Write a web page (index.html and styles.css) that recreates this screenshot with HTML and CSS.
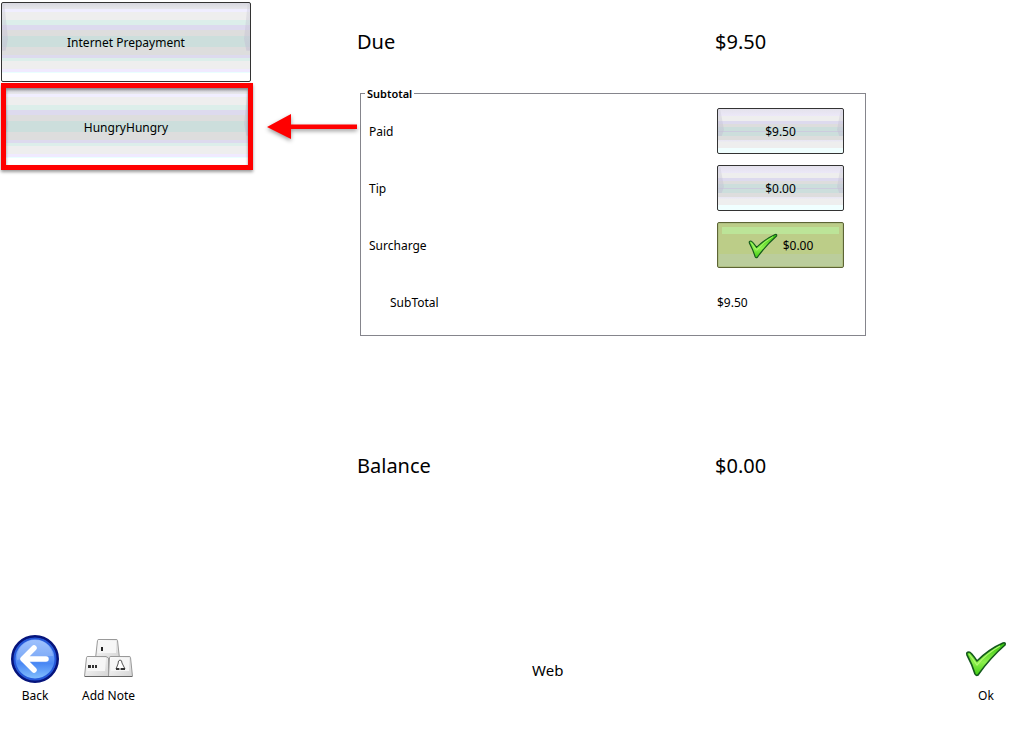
FILE: index.html
```
<!DOCTYPE html>
<html lang="en">
<head>
  <meta charset="UTF-8">
  <meta name="viewport" content="width=device-width, initial-scale=1.0">
  <title>Payment</title>
  <link rel="stylesheet" href="styles.css">
</head>
<body>
  <svg class="defs" width="0" height="0" aria-hidden="true">
    <defs>
      <linearGradient id="tickFill" x1="0" y1="0" x2="0" y2="1">
        <stop offset="0" stop-color="#35c40c"/>
        <stop offset="0.6" stop-color="#8cf04c"/>
        <stop offset="1" stop-color="#3ecb10"/>
      </linearGradient>
      <linearGradient id="backFill" x1="0" y1="0" x2="0" y2="1">
        <stop offset="0" stop-color="#8fb8ff"/>
        <stop offset="0.5" stop-color="#5c94f5"/>
        <stop offset="0.6" stop-color="#4a88f4"/>
        <stop offset="1" stop-color="#8cc8ff"/>
      </linearGradient>
      <linearGradient id="keyFill" x1="0" y1="0" x2="1" y2="1">
        <stop offset="0" stop-color="#ffffff"/>
        <stop offset="1" stop-color="#d4d4d4"/>
      </linearGradient>
      <symbol id="tick" viewBox="0 0 42 36">
        <path d="M2 14 Q1 11 4 11 Q6 11 12 20 Q24 8 38 2 Q41 1 40 4 Q25 17 13 34 Q11 35 10 33 Q7 23 2 14Z" fill="url(#tickFill)" stroke="#14591c" stroke-width="1.6" stroke-linejoin="round"/>
        <path d="M4 13 Q8 18 12 24 Q22 12 35 5" fill="none" stroke="#b0f870" stroke-width="1.2"/>
      </symbol>
    </defs>
  </svg>

  <div class="screen">
    <div class="content">
      <nav class="methods">
        <button type="button" class="btn btn-method">Internet Prepayment</button>
        <div class="highlighted">
          <button type="button" class="btn btn-method">HungryHungry</button>
          <svg class="arrow" width="94" height="32" viewBox="0 0 94 32" aria-hidden="true">
            <path d="M1 14 L25 1 V11.500 H91 V16 H25 V26 Z" fill="#f00"/>
          </svg>
        </div>
      </nav>

      <main class="payment">
        <div class="total">
          <span>Due</span>
          <span>$9.50</span>
        </div>

        <fieldset class="subtotal">
          <legend>Subtotal</legend>
          <div class="row">
            <label for="paid">Paid</label>
            <button type="button" id="paid" class="btn btn-amount">$9.50</button>
          </div>
          <div class="row">
            <label for="tip">Tip</label>
            <button type="button" id="tip" class="btn btn-amount">$0.00</button>
          </div>
          <div class="row">
            <label for="surcharge">Surcharge</label>
            <button type="button" id="surcharge" class="btn btn-amount selected">
              <svg width="30" height="26" aria-hidden="true"><use href="#tick"/></svg>
              $0.00
            </button>
          </div>
          <div class="row row-sum">
            <span class="indent">SubTotal</span>
            <span>$9.50</span>
          </div>
        </fieldset>

        <div class="total balance">
          <span>Balance</span>
          <span>$0.00</span>
        </div>
      </main>
    </div>

    <footer class="toolbar">
      <button type="button" class="tool">
        <svg width="50" height="50" viewBox="0 0 50 50" aria-hidden="true">
          <circle cx="25" cy="25" r="22.500" fill="url(#backFill)" stroke="#06147c" stroke-width="3"/>
          <circle cx="25" cy="25" r="20.500" fill="none" stroke="#2457d8" stroke-width="2"/>
          <path d="M7 26 A18 18 0 0 1 43 22 Q25 22 7 26Z" fill="#fff" opacity="0.2"/>
          <path d="M24 14 L13 25 L24 36 M14 25 H36" fill="none" stroke="#fff" stroke-width="5.500" stroke-linecap="round" stroke-linejoin="round"/>
        </svg>
        Back
      </button>
      <button type="button" class="tool">
        <svg width="52" height="50" viewBox="0 0 52 50" aria-hidden="true">
          <g fill="url(#keyFill)" stroke="#999">
            <path d="M14.500 6.500 Q14.500 5.500 16 5.500 H33 Q34.500 5.500 34.500 6.500 L36.500 24.500 H12.500 Z"/>
            <path d="M3.500 23.500 Q3.500 22.500 5 22.500 H23 L25.500 24 V42.500 H1.500 Z"/>
            <path d="M26.500 23.500 Q26.500 22.500 28 22.500 H46 Q47.500 22.500 47.500 23.500 L49.500 42.500 H25.500 Z"/>
          </g>
          <path d="M16 7 H33 L33 19 H15 Z M5 24 H23 L22 37 H4 Z M28 24 H46 L46 37 H28 Z" fill="#f6f6f6"/>
          <path d="M2 42.500 H49" stroke="#666"/>
          <path d="M18 13 H20 V17 H18 Z" fill="#222"/>
          <path d="M5 32.500 H8 M9 32.500 H11 M12 32.500 H14" stroke="#333" stroke-width="3"/>
          <path d="M37 26 Q39 26 39 29 L42 35 H33 L35 30 Q35 26 37 26 Z" fill="#fff" stroke="#555"/>
          <path d="M33 35 H36 M38 35 H42" stroke="#333" stroke-width="2"/>
        </svg>
        Add Note
      </button>
      <span class="source">Web</span>
      <button type="button" class="tool">
        <svg width="42" height="50" aria-hidden="true"><use href="#tick"/></svg>
        Ok
      </button>
    </footer>
  </div>
</body>
</html>
```

FILE: styles.css
```
* {
  box-sizing: border-box;
}
body {
  margin: 0;
  background: #fff;
  color: #000;
  font-family: "Noto Sans", sans-serif;
  font-size: 12px;
  line-height: 16px;
}
button {
  font: inherit;
  color: inherit;
  cursor: pointer;
}
.defs {
  position: absolute;
}
.screen {
  display: flex;
  flex-direction: column;
  min-height: 100vh;
}
.content {
  display: grid;
  grid-template-columns: 252px 1fr;
  gap: 105px;
  flex: 1;
  padding-right: 148px;
}

/* buttons */
.btn {
  position: relative;
  display: flex;
  align-items: center;
  justify-content: center;
  gap: 5px;
  padding: 2px 0 0;
  border: 1px solid #333;
  border-radius: 2px;
}
.btn-method {
  width: 100%;
  height: 80px;
  background: linear-gradient(
    #d8d8e0 0%, #e8e8ec 8%,
    #f0eeff 8%, #f0eeff 11%,
    #eee 11%, #eee 22%,
    #dceeea 22%, #dceeea 28%,
    #dddaee 28%, #dddaee 35%,
    #ddd 35%, #ddd 42%,
    #ccdedc 42%, #ccdedc 57%,
    #ddd 57%, #ddd 67%,
    #dddaee 67%, #dddaee 70%,
    #dceeea 70%, #dceeea 74%,
    #eee 74%, #eee 84%,
    #f0eaff 84%, #f0eaff 88%,
    #eaffff 88%, #eaffff 90%,
    #fff 90%
  );
}
.btn-amount {
  width: 100%;
  height: 46px;
  background: linear-gradient(
    #e4e2ec 0%, #ece8f8 16%,
    #eee 16%, #eee 27%,
    #dddaee 27%, #dddaee 33%,
    #ddd 33%, #ddd 42%,
    #ccdedc 42%, #ccdedc 50%,
    #ccccde 50%, #ccccde 53%,
    #ccdedc 53%, #ccdedc 61%,
    #ddd 61%, #ddd 71%,
    #e8e6f4 71%, #eee 76%,
    #eee 88%,
    #f0ffff 88%
  );
}
/* bevelled sides */
.btn::before,
.btn::after {
  content: "";
  position: absolute;
  top: 1px;
  left: 0;
  width: 6px;
  height: 60%;
  background: linear-gradient(rgba(200, 200, 210, 0.3), rgba(195, 190, 212, 0.5));
  clip-path: polygon(0 0, 40% 0, 100% 75%, 60% 100%, 0 100%);
}
.btn::after {
  left: auto;
  right: 0;
  transform: scaleX(-1);
}
.btn.selected {
  border-color: #5c6434;
  background: linear-gradient(#bccd88 70%, #bbcd9c 70%);
  box-shadow: inset 0 0 0 1px #b0c084;
}
/* gloss strip on the chosen amount */
.selected::before {
  top: 4px;
  left: 4px;
  right: 4px;
  width: auto;
  height: 7px;
  background: #bce498;
  clip-path: none;
}
.selected::after {
  display: none;
}
.selected svg {
  position: relative;
}

/* payment methods */
.methods {
  padding: 2px 1px;
}
.highlighted {
  position: relative;
  margin-top: 5px;
}
.highlighted::after {
  content: "";
  position: absolute;
  inset: -4px -2px -3px 0;
  border: 5px solid #f00;
  box-shadow: 0 2px 3px rgba(0, 0, 0, 0.4), inset 0 2px 3px rgba(0, 0, 0, 0.4);
  pointer-events: none;
}
.arrow {
  position: absolute;
  top: 26px;
  left: 100%;
  margin-left: 15px;
  filter: drop-shadow(0 2px 2px rgba(0, 0, 0, 0.4));
}

/* payment details */
.payment {
  padding-top: 29px;
}
.total {
  display: grid;
  grid-template-columns: 358px 1fr;
  font-size: 20px;
  line-height: 26px;
}
.subtotal {
  margin: 29px 0 0 3px;
  padding: 6px 21px 10px 8px;
  border: 1px solid #85858c;
}
.subtotal legend {
  margin-left: -4px;
  padding: 2px 2px 0;
  font-size: 11px;
  font-weight: 600;
}
.row {
  display: grid;
  grid-template-columns: 348px 1fr;
  align-items: center;
  margin-bottom: 11px;
}
.row label,
.row span {
  padding-top: 2px;
}
.row-sum {
  height: 46px;
  margin: 0;
}
.row .indent {
  padding-left: 21px;
}
.balance {
  margin-top: 117px;
}

/* bottom toolbar */
.toolbar {
  display: flex;
  align-items: center;
  padding: 0 0 25px 10px;
}
.tool {
  display: flex;
  flex-direction: column;
  align-items: center;
  gap: 4px;
  padding: 0;
  border: 0;
  background: none;
}
.tool + .tool {
  margin-left: 22px;
}
.source {
  flex: 1;
  padding: 2px 0 0 397px;
  font-size: 15px;
}
.toolbar .tool:last-child {
  margin-right: 7px;
}
```
